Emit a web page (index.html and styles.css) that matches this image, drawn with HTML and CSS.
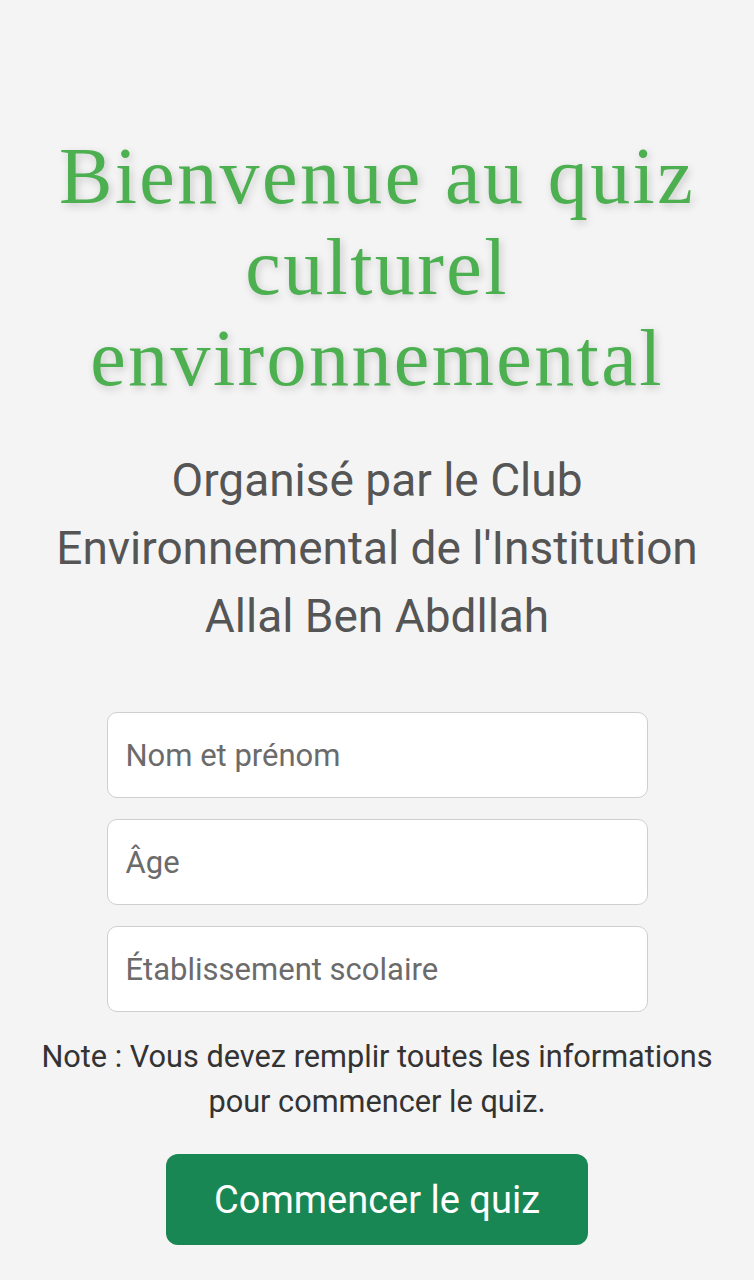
FILE: index.html
```html
<!DOCTYPE html>
<html lang="fr">
<head>
<meta charset="utf-8">
<title>Quiz culturel environnemental</title>
<link rel="stylesheet" href="styles.css">
</head>
<body>
<main class="page">
  <h1 class="title">Bienvenue au quiz culturel environnemental</h1>
  <p class="subtitle">Organisé par le Club Environnemental de l'Institution Allal Ben Abdllah</p>
  <form class="form">
    <input class="field" type="text" placeholder="Nom et prénom">
    <input class="field" type="text" placeholder="Âge">
    <input class="field" type="text" placeholder="Établissement scolaire">
  </form>
  <p class="note">Note : Vous devez remplir toutes les informations pour commencer le quiz.</p>
  <button class="start" type="button">Commencer le quiz</button>
</main>
</body>
</html>
```

FILE: styles.css
```css
* { box-sizing: border-box; }
html, body {
  margin: 0;
  padding: 0;
  background: #f4f4f4;
}
body {
  font-family: Roboto, "Liberation Sans", sans-serif;
}
.page {
  display: flex;
  flex-direction: column;
  align-items: center;
  padding: 131px 10px 40px;
  min-height: 1280px;
}
.title {
  margin: 0;
  font-family: "Liberation Serif", serif;
  font-weight: normal;
  font-size: 80px;
  line-height: 91px;
  letter-spacing: 2.4px;
  color: #4caf50;
  text-align: center;
  text-shadow: 2px 3px 8px rgba(0, 0, 0, 0.18);
  max-width: 720px;
}
.subtitle {
  margin: 42px 0 0;
  font-size: 46px;
  line-height: 68px;
  color: #555555;
  text-align: center;
  max-width: 720px;
}
.form {
  margin-top: 62px;
  display: flex;
  flex-direction: column;
  gap: 21px;
  width: 541px;
}
.field {
  height: 86px;
  width: 100%;
  padding: 0 18px;
  border: 1.5px solid #cfcfcf;
  border-radius: 10px;
  background: #ffffff;
  font-family: Roboto, "Liberation Sans", sans-serif;
  font-size: 31px;
  color: #333;
  outline: none;
}
.field::placeholder {
  color: #6b6b6b;
  opacity: 1;
}
.note {
  margin: 22px 0 0;
  font-size: 30.7px;
  line-height: 45px;
  color: #333333;
  text-align: center;
  max-width: 690px;
}
.start {
  margin-top: 30px;
  height: 91px;
  padding: 0 48px;
  border: none;
  border-radius: 12px;
  background: #198754;
  color: #ffffff;
  font-family: Roboto, "Liberation Sans", sans-serif;
  font-size: 38px;
}
```
